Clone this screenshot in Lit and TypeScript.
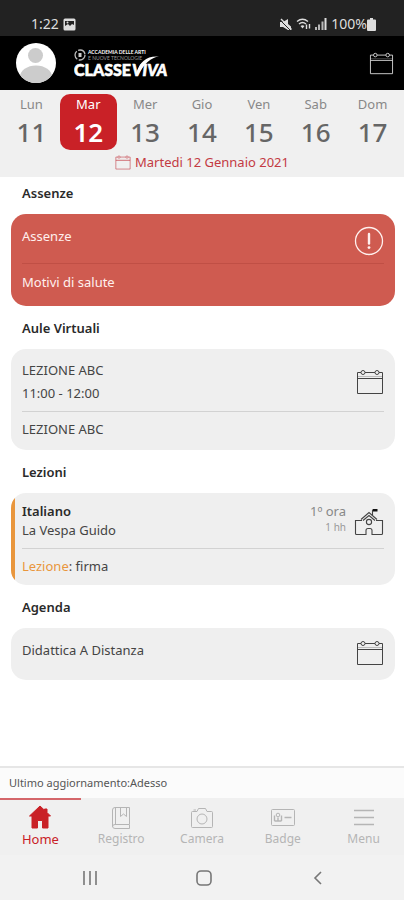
import { LitElement, html, svg, css, nothing } from "lit";
import { customElement, state } from "lit/decorators.js";
import { classMap } from "lit/directives/class-map.js";

const calendar = html`<svg class="calendar" viewBox="0 0 28 26" fill="none" stroke="currentColor">
  <path d="M5 3.5H1.5V24.5H26.5V3.5H23M9 3.5H19M1.5 9.5H26.5" />
  <path d="M1.5 7.5H26.5" opacity=".3" />
  <circle cx="7" cy="3.5" r="2" /><circle cx="21" cy="3.5" r="2" />
</svg>`;

const alertIcon = html`<svg class="alert" viewBox="0 0 30 30" fill="none" stroke="currentColor">
  <circle cx="15" cy="15" r="13.5" stroke-width="1.3" />
  <path d="M15 8V17.5" stroke-width="2.4" stroke-linecap="round" />
  <circle cx="15" cy="21.6" r="1.4" fill="currentColor" stroke="none" />
</svg>`;

const school = html`<svg class="school" viewBox="0 0 30 28" fill="none" stroke="currentColor" stroke-width="1.1">
  <path d="M8 12.5H1.5V25.5Q1.5 26.5 2.5 26.5H12V22.5Q12 20.5 14 20.5H16Q18 20.5 18 22.5V26.5H27.5Q28.5 26.5 28.5 25.5V12.5H22" />
  <path d="M7 11.5L15 4.5L23 11.5M9 12.5L15 7.5L21 12.5" />
  <circle cx="15" cy="14" r="2.6" />
  <path d="M18.5 7V1.5" />
  <path d="M19 1H23.5V3.5H19Z" fill="#111" stroke="none" />
</svg>`;

const tabIcons: Record<string, unknown> = {
  Home: svg`<path d="M13 1L2.5 11H5V23H10.5V15.5H15.5V23H21V11H23.5L20 7.5V4H17.5V5.2Z" fill="currentColor" />`,
  Registro: svg`<path d="M21.5 19V2.5H7Q4.5 2.5 4.5 5V21Q4.5 23.5 7 23.5H21.5V19.5H7Q4.5 19.5 4.5 21.5M7.5 2.5V19.5M12.5 2.5V11.5L15.5 9L18.5 11.5V2.5" />`,
  Camera: svg`<path d="M2.5 7.5Q2.5 6.5 3.5 6.5H8L9.5 3.5H16.5L18 6.5H22.5Q23.5 6.5 23.5 7.5V21.5Q23.5 22.5 22.5 22.5H3.5Q2.5 22.5 2.5 21.5Z" /><circle cx="13" cy="14" r="5" /><path d="M4.5 5H7" />`,
  Badge: svg`<rect x="1.5" y="4.5" width="23" height="16" rx="1" /><circle cx="8" cy="10" r="1.8" /><path d="M4.5 16V10.5M11.5 16V10.5M4.5 16H11.5M8 12.5V16M14.5 12.5H21.5" stroke-width="1.4" />`,
  Menu: svg`<path d="M3 5.5H23M3 12.5H23M3 19.5H23" stroke-width="1.4" />`,
};

@customElement("app-root")
export class AppRoot extends LitElement {
  @state() private selected = 12;
  @state() private tab = "Home";

  private days: [string, number][] = [
    ["Lun", 11], ["Mar", 12], ["Mer", 13], ["Gio", 14], ["Ven", 15], ["Sab", 16], ["Dom", 17],
  ];

  static styles = css`
    :host {
      display: flex;
      flex-direction: column;
      min-height: 100vh;
      background: #fff;
      color: #444;
      font: 13px/20px "Noto Sans", "Open Sans", sans-serif;
    }
    * { box-sizing: border-box; }
    svg { display: block; flex: none; }
    button { font: inherit; color: inherit; background: none; border: 0; padding: 0; cursor: pointer; }
    h2, p { margin: 0; }
    h2 { font: inherit; }

    .status {
      display: flex;
      align-items: flex-end;
      justify-content: space-between;
      height: 36px;
      padding: 0 28px 2px 31px;
      background: #222;
      color: #ddd;
      font-size: 14px;
    }
    .group { display: flex; align-items: center; gap: 4px; }
    .level { display: flex; align-items: center; }

    .bar {
      display: flex;
      align-items: center;
      height: 54px;
      padding: 0 10px 0 16px;
      background: #000;
      color: #ddd;
    }
    .logo { margin-left: 18px; }
    .open { margin-left: auto; }
    .calendar { width: 28px; height: 26px; }
    .open .calendar { width: 25px; height: 23px; }
    .alert { width: 30px; height: 30px; }
    .school { width: 30px; height: 28px; }

    .week { background: #f0f0f0; padding: 4px 3px 5px; }
    .days { display: grid; grid-template-columns: repeat(7, 1fr); }
    .day {
      display: flex;
      flex-direction: column;
      align-items: center;
      height: 56px;
      border-radius: 10px;
      color: #888;
    }
    .number { font-size: 26px; line-height: 36px; font-weight: 500; color: #666; }
    .day.selected { background: #c92127; color: #fff; }
    .day.selected .number { color: #fff; font-weight: 600; }
    .date {
      display: flex;
      align-items: center;
      justify-content: center;
      gap: 4px;
      height: 22px;
      padding-top: 2px;
      color: #c33a43;
    }
    .date .calendar { width: 16px; height: 15px; }

    main {
      flex: 1;
      display: flex;
      flex-direction: column;
      gap: 12px;
      padding: 6px 9px 12px 11px;
    }
    .title { padding: 0 11px; margin-bottom: 11px; font-weight: 600; color: #2a2a2a; }
    .card { position: relative; border-radius: 15px; background: #efefef; padding: 0 11px; overflow: hidden; }
    .top { display: flex; justify-content: space-between; padding: 12px 0 17px; }
    .top.lines { padding: 10px 0 6px; line-height: 23px; }
    .top.lesson { padding: 9px 0 8px; line-height: 19px; }
    .top.single { padding: 12px 0 20px; }
    .side { display: flex; align-items: flex-start; height: 0; }
    .lines .side .calendar { margin-top: 10px; }
    .bottom { border-top: 1px solid #d2d2d2; padding: 7px 0 11px; }
    .card.absence { background: #cf5b50; color: #fff0ee; }
    .absence .bottom { border-color: #c04f45; padding: 8px 0 14px; }
    .orange .bottom { padding-bottom: 9px; }
    .card.orange::before {
      content: "";
      position: absolute;
      inset: 0 auto 0 0;
      width: 4px;
      background: #e9963c;
    }
    .name { font-weight: 600; color: #2a2a2a; }
    .hour { margin-right: 8px; text-align: right; color: #888; }
    .small { font-size: 10px; line-height: 12px; color: #999; }
    .school { margin-top: 6px; }
    .accent { color: #e9963c; }

    .update {
      height: 32px;
      padding: 5px 9px;
      border-top: 2px solid #e6e6e6;
      background: #fbfbfb;
      font-size: 11px;
      color: #555;
    }
    .tabs { display: grid; grid-template-columns: repeat(5, 1fr); background: #f0f0f0; }
    .tab {
      display: flex;
      flex-direction: column;
      align-items: center;
      height: 57px;
      padding-top: 5px;
      border-top: 2px solid transparent;
      color: #b5b5b5;
      font-size: 12px;
      text-decoration: none;
    }
    .tab.active { border-color: #d4666a; color: #c92127; font-size: 13px; }
    .tab svg { width: 26px; height: 24px; }
    .system { display: grid; grid-template-columns: repeat(3, 114px); justify-content: center; height: 45px; padding-left: 3px; background: #f2f2f2; color: #777; }
    .system button { display: flex; align-items: center; justify-content: center; }
  `;

  render() {
    return html`
      <div class="status">
        <div class="group">
          <span>1:22</span>
          <svg width="13" height="13" viewBox="0 0 13 13"><rect x=".5" y=".5" width="12" height="12" rx="1.5" fill="#ddd" /><path d="M2 3H11V7L9 6L7 8L5 6L2 8Z" fill="#222" /><circle cx="4.5" cy="4.5" r="1" fill="#ddd" /></svg>
        </div>
        <div class="group">
          <svg width="13" height="13" viewBox="0 0 13 13" fill="#ddd"><path d="M1 4H4L9 1V6L12 8.5V12H9L4 9H1Z" /><path d="M0 1L12 13" stroke="#222" stroke-width="1" /><path d="M2 1L12.5 11.5" stroke="#ddd" stroke-width="1.4" /></svg>
          <svg width="15" height="12" viewBox="0 0 15 12" fill="none" stroke="#ddd" stroke-width="1.4"><path d="M1 3.5Q6.5-1 12 3.5M3 6Q6.5 3 10 6" /><path d="M4.5 8L6.5 10.5L8.5 8Q6.5 6.5 4.5 8Z" fill="#ddd" stroke="none" /><path d="M10.5 11V6.5M13.5 6V10.5" /></svg>
          <svg width="12" height="12" viewBox="0 0 12 12" fill="#ddd"><path d="M0 9H2V12H0ZM3 6.5H5V12H3ZM6.5 3.5H8.5V12H6.5Z" opacity=".8" /><path d="M9.5 0H11.5V12H9.5Z" /></svg>
          <div class="level">
            <span>100%</span>
            <svg width="9" height="13" viewBox="0 0 9 13" fill="#ddd"><path d="M3 0H6V1.5H8Q9 1.5 9 2.5V12Q9 13 8 13H1Q0 13 0 12V2.5Q0 1.5 1 1.5H3Z" /></svg>
          </div>
        </div>
      </div>

      <header class="bar">
        <button aria-label="Profilo">
          <svg width="40" height="40" viewBox="0 0 40 40">
            <defs><clipPath id="face"><circle cx="20" cy="20" r="20" /></clipPath></defs>
            <g clip-path="url(#face)"><rect width="40" height="40" fill="#fff" /><circle cx="19.5" cy="12.5" r="7.5" fill="#ccc" /><ellipse cx="20" cy="34" rx="16" ry="11.5" fill="#ccc" /></g>
          </svg>
        </button>
        <svg class="logo" width="96" height="30" viewBox="0 0 96 30" fill="#fff" font-family="Lato, sans-serif" role="img" aria-label="ClasseViva">
          <circle cx="6" cy="7" r="5" fill="none" stroke="#bbb" stroke-width="1.3" stroke-dasharray="9 1.5" />
          <path d="M4.5 5H7.5V9H4.5Z" fill="#ccc" />
          <text x="14" y="6" font-size="5" font-weight="700">ACCADEMIA DELLE ARTI</text>
          <text x="14" y="12" font-size="5" fill="#999">E NUOVE TECNOLOGIE</text>
          <g font-size="16" font-weight="900" stroke="#fff" stroke-width=".6">
            <text x="0" y="28">CLASSE</text>
            <text x="58" y="28" font-style="italic">VIVA</text>
          </g>
          <path d="M62 26Q67 7 85 8.5Q73 10 64 27Z" />
        </svg>
        <button class="open" aria-label="Apri calendario">${calendar}</button>
      </header>

      <div class="week">
        <div class="days">
          ${this.days.map(([name, n]) => html`
            <button class=${classMap({ day: true, selected: n === this.selected })} @click=${() => (this.selected = n)}>
              <span>${name}</span><span class="number">${n}</span>
            </button>`)}
        </div>
        <div class="date">${calendar}<span>Martedi 12 Gennaio 2021</span></div>
      </div>

      <main>
        <section>
          <h2 class="title">Assenze</h2>
          <div class="card absence">
            <div class="top"><p>Assenze</p><div class="side">${alertIcon}</div></div>
            <p class="bottom">Motivi di salute</p>
          </div>
        </section>
        <section>
          <h2 class="title">Aule Virtuali</h2>
          <div class="card">
            <div class="top lines"><div><p>LEZIONE ABC</p><p>11:00 - 12:00</p></div><div class="side">${calendar}</div></div>
            <p class="bottom">LEZIONE ABC</p>
          </div>
        </section>
        <section>
          <h2 class="title">Lezioni</h2>
          <div class="card orange">
            <div class="top lesson">
              <div><p class="name">Italiano</p><p>La Vespa Guido</p></div>
              <div class="side"><div class="hour"><p>1º ora</p><p class="small">1 hh</p></div>${school}</div>
            </div>
            <p class="bottom"><span class="accent">Lezione</span>: firma</p>
          </div>
        </section>
        <section>
          <h2 class="title">Agenda</h2>
          <div class="card">
            <div class="top single"><p>Didattica A Distanza</p><div class="side">${calendar}</div></div>
          </div>
        </section>
      </main>

      <div class="update">Ultimo aggiornamento:Adesso</div>
      <nav class="tabs">
        ${Object.keys(tabIcons).map((name) => html`
          <a href="#${name.toLowerCase()}" class=${classMap({ tab: true, active: name === this.tab })}
            aria-current=${name === this.tab ? "page" : nothing} @click=${() => (this.tab = name)}>
            <svg viewBox="0 0 26 24" fill="none" stroke="currentColor">${tabIcons[name]}</svg>
            <span>${name}</span>
          </a>`)}
      </nav>
      <div class="system">
        <button aria-label="Recenti"><svg width="16" height="16" viewBox="0 0 16 16" stroke="currentColor" stroke-width="1.6"><path d="M2 1V15M8 1V15M14 1V15" /></svg></button>
        <button aria-label="Schermata principale"><svg width="18" height="18" viewBox="0 0 18 18" fill="none" stroke="currentColor" stroke-width="1.6"><rect x="2" y="2" width="14" height="14" rx="4" /></svg></button>
        <button aria-label="Indietro"><svg width="16" height="16" viewBox="0 0 16 16" fill="none" stroke="currentColor" stroke-width="1.6"><path d="M11 2L5 8L11 14" /></svg></button>
      </div>
    `;
  }
}
